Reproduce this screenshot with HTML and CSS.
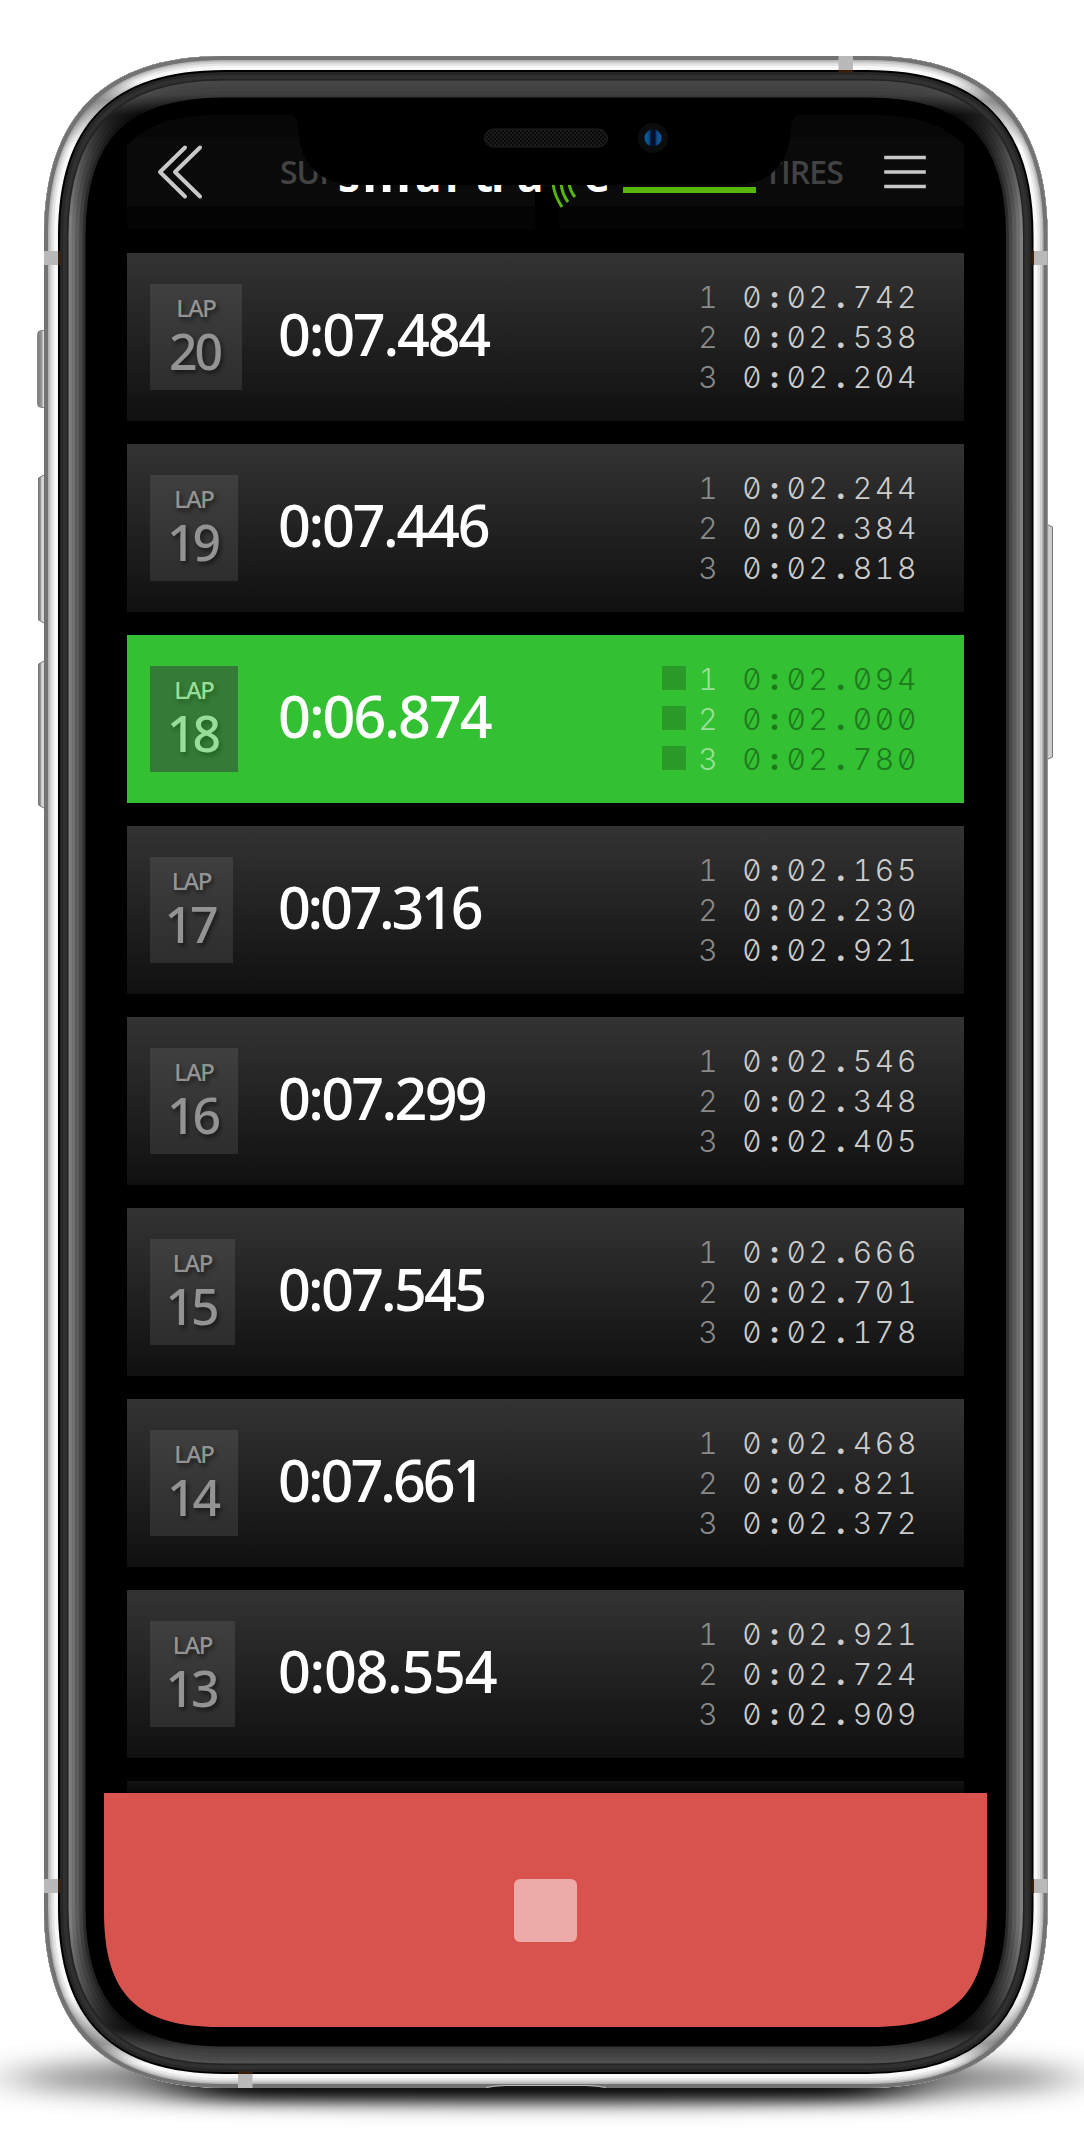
FILE: index.html
```html
<!DOCTYPE html>
<html lang="en">
<head>
<meta charset="utf-8">
<title>SmartRace – Lap times</title>
<link rel="stylesheet" href="styles.css">
</head>
<body>
<div class="phone">
  <svg class="frame" viewBox="0 0 1084 2142" aria-hidden="true">
    <defs>
      <path id="body" d="M44,236 C44,116 104,56 224,56 H867.5 C987.500,56 1047.500,116 1047.500,236 V1908 C1047.500,2028 987.500,2088 867.500,2088 H224 C104,2088 44,2028 44,1908 Z"/>
      <clipPath id="bodyClip"><use href="#body"/></clipPath>
      <linearGradient id="bezel" gradientUnits="userSpaceOnUse" x1="0" y1="56" x2="0" y2="2088">
        <stop offset="0" stop-color="#3a3a3a"/><stop offset=".019" stop-color="#3c3c3c"/><stop offset=".029" stop-color="#0a0a0a"/>
        <stop offset=".05" stop-color="#222"/><stop offset=".09" stop-color="#2f2f2f"/><stop offset=".91" stop-color="#2f2f2f"/>
        <stop offset=".95" stop-color="#222"/><stop offset=".971" stop-color="#0a0a0a"/><stop offset=".981" stop-color="#383838"/><stop offset="1" stop-color="#444"/>
      </linearGradient>
      <linearGradient id="gloss" gradientUnits="userSpaceOnUse" x1="0" y1="56" x2="0" y2="2088">
        <stop offset="0" stop-color="#fff" stop-opacity=".01"/><stop offset=".03" stop-color="#fff" stop-opacity=".02"/>
        <stop offset=".08" stop-color="#fff" stop-opacity=".115"/><stop offset=".92" stop-color="#fff" stop-opacity=".115"/>
        <stop offset=".97" stop-color="#fff" stop-opacity=".02"/><stop offset="1" stop-color="#fff" stop-opacity=".03"/>
      </linearGradient>
      <linearGradient id="corner" gradientUnits="userSpaceOnUse" x1="0" y1="56" x2="0" y2="2088">
        <stop offset=".012" stop-color="#666" stop-opacity="0"/><stop offset=".022" stop-color="#666" stop-opacity=".65"/><stop offset=".045" stop-color="#777" stop-opacity="0"/>
        <stop offset=".955" stop-color="#777" stop-opacity="0"/><stop offset=".978" stop-color="#666" stop-opacity=".65"/><stop offset=".988" stop-color="#666" stop-opacity="0"/>
      </linearGradient>
      <linearGradient id="key" x1="0" x2="1" y1="0" y2="0">
        <stop offset="0" stop-color="#777"/><stop offset=".35" stop-color="#999"/><stop offset=".5" stop-color="#ddd"/><stop offset="1" stop-color="#c8c8c8"/>
      </linearGradient>
      <filter id="soft" x="-20%" y="-200%" width="140%" height="500%"><feGaussianBlur stdDeviation="30 12"/></filter>
      <filter id="contact" x="-20%" y="-200%" width="140%" height="500%"><feGaussianBlur stdDeviation="40 8"/></filter>
    </defs>

    <ellipse cx="542" cy="2078" rx="535" ry="24" fill="#000" fill-opacity=".5" filter="url(#soft)"/>
    <rect x="180" y="2056" width="724" height="44" rx="20" fill="#000" fill-opacity=".95" filter="url(#contact)"/>

    <rect x="37.500" y="330.500" width="12" height="77" rx="4" fill="url(#key)" stroke="#888"/>
    <path d="M45,474.500 L38.500,478 V620 L45,623.500Z" fill="url(#key)" stroke="#777"/>
    <path d="M45,660.500 L38.500,664 V805 L45,808.500Z" fill="url(#key)" stroke="#777"/>
    <path d="M1046,524 L1052.500,527 V757 L1046,760Z" fill="#ccc" stroke="#777"/>

    <g clip-path="url(#bodyClip)" fill="none">
      <use href="#body" fill="#000"/>
      <use href="#body" stroke="url(#bezel)" stroke-width="83"/>
      <use href="#body" stroke="url(#gloss)" stroke-width="77"/>
      <use href="#body" stroke="url(#gloss)" stroke-width="70"/>
      <use href="#body" stroke="url(#gloss)" stroke-width="62"/>
      <use href="#body" stroke="url(#gloss)" stroke-width="55"/>
      <use href="#body" stroke="#222" stroke-width="49"/>
      <use href="#body" stroke="#303030" stroke-width="46"/>
      <use href="#body" stroke="#262626" stroke-width="38"/>
      <use href="#body" stroke="#000" stroke-width="32"/>
      <use href="#body" stroke="#f8f8f8" stroke-width="28"/>
      <use href="#body" stroke="#e6e6e6" stroke-width="20"/>
      <use href="#body" stroke="#cfcfcf" stroke-width="15"/>
      <use href="#body" stroke="#b4b4b4" stroke-width="11"/>
      <use href="#body" stroke="url(#corner)" stroke-width="28"/>
      <use href="#body" stroke="#737373" stroke-width="8"/>
      <g fill="#b9b9b9">
        <rect x="44" y="251" width="14" height="14"/><rect x="1034" y="251" width="14" height="14"/>
        <rect x="44" y="1879" width="14" height="14"/><rect x="1034" y="1879" width="14" height="14"/>
        <rect x="838.500" y="56" width="14.500" height="14"/><rect x="238" y="2074" width="14.500" height="14"/>
      </g>
      <g fill="#3a1e0c">
        <rect x="58" y="251" width="2.500" height="14"/><rect x="1031.500" y="251" width="2.500" height="14"/>
        <rect x="58" y="1879" width="2.500" height="14"/><rect x="1031.500" y="1879" width="2.500" height="14"/>
        <rect x="838.500" y="70" width="14.500" height="2.500"/><rect x="238" y="2071.500" width="14.500" height="2.500"/>
      </g>
      <path d="M486,2088 Q496,2086 506,2086 H586 Q596,2086 606,2088Z" fill="#161616"/>
      <path d="M486,2087.500 Q496,2085.500 506,2085.500 H586 Q596,2085.500 606,2087.500" stroke="#bbb"/>
    </g>
  </svg>

  <main class="screen">
    <header class="topbar">
      <svg class="back" viewBox="0 0 50 56"><path d="M30,3.500 L5,28 L30,52.500 M45,3.500 L20,28 L45,52.500"/></svg>
      <span class="tab tab-left">SUPER</span>
      <svg class="logo" viewBox="0 0 424 60">
        <text y="41" x="8 32 85 115 144 161 187 254">s<tspan class="wide">m</tspan>artrae</text>
        <rect x="293" y="36" width="133" height="6"/>
        <path d="M223,32 Q224,44 232,56 M231,32 Q232,43 238,51 M239,32 Q240,40 245,46"/>
      </svg>
      <span class="tab tab-right">TIRES</span>
      <svg class="menu" viewBox="0 0 42 34"><path d="M2,2.500 H40 M2,17 H40 M2,31.500 H40"/></svg>
    </header>

    <section class="laps">
      <article class="lap">
        <div class="badge"><small>LAP</small><strong>20</strong></div>
        <div class="time" style="--track:-2.2px">0:07.484</div>
        <ol class="sectors">
          <li><b>1</b><span>0</span><i>:</i><span>02</span><i>.</i><span>742</span></li>
          <li><b>2</b><span>0</span><i>:</i><span>02</span><i>.</i><span>538</span></li>
          <li><b>3</b><span>0</span><i>:</i><span>02</span><i>.</i><span>204</span></li>
        </ol>
      </article>
      <article class="lap">
        <div class="badge w88"><small>LAP</small><strong>19</strong></div>
        <div class="time" style="--track:-2.3px">0:07.446</div>
        <ol class="sectors">
          <li><b>1</b><span>0</span><i>:</i><span>02</span><i>.</i><span>244</span></li>
          <li><b>2</b><span>0</span><i>:</i><span>02</span><i>.</i><span>384</span></li>
          <li><b>3</b><span>0</span><i>:</i><span>02</span><i>.</i><span>818</span></li>
        </ol>
      </article>
      <article class="lap best">
        <div class="badge w88"><small>LAP</small><strong>18</strong></div>
        <div class="time" style="--track:-2px">0:06.874</div>
        <ol class="sectors">
          <li><b>1</b><span>0</span><i>:</i><span>02</span><i>.</i><span>094</span></li>
          <li><b>2</b><span>0</span><i>:</i><span>02</span><i>.</i><span>000</span></li>
          <li><b>3</b><span>0</span><i>:</i><span>02</span><i>.</i><span>780</span></li>
        </ol>
      </article>
      <article class="lap">
        <div class="badge w83"><small>LAP</small><strong>17</strong></div>
        <div class="time" style="--track:-3.3px">0:07.316</div>
        <ol class="sectors">
          <li><b>1</b><span>0</span><i>:</i><span>02</span><i>.</i><span>165</span></li>
          <li><b>2</b><span>0</span><i>:</i><span>02</span><i>.</i><span>230</span></li>
          <li><b>3</b><span>0</span><i>:</i><span>02</span><i>.</i><span>921</span></li>
        </ol>
      </article>
      <article class="lap">
        <div class="badge w88"><small>LAP</small><strong>16</strong></div>
        <div class="time" style="--track:-2.7px">0:07.299</div>
        <ol class="sectors">
          <li><b>1</b><span>0</span><i>:</i><span>02</span><i>.</i><span>546</span></li>
          <li><b>2</b><span>0</span><i>:</i><span>02</span><i>.</i><span>348</span></li>
          <li><b>3</b><span>0</span><i>:</i><span>02</span><i>.</i><span>405</span></li>
        </ol>
      </article>
      <article class="lap">
        <div class="badge w85"><small>LAP</small><strong>15</strong></div>
        <div class="time" style="--track:-2.8px">0:07.545</div>
        <ol class="sectors">
          <li><b>1</b><span>0</span><i>:</i><span>02</span><i>.</i><span>666</span></li>
          <li><b>2</b><span>0</span><i>:</i><span>02</span><i>.</i><span>701</span></li>
          <li><b>3</b><span>0</span><i>:</i><span>02</span><i>.</i><span>178</span></li>
        </ol>
      </article>
      <article class="lap">
        <div class="badge w88"><small>LAP</small><strong>14</strong></div>
        <div class="time" style="--track:-3px">0:07.661</div>
        <ol class="sectors">
          <li><b>1</b><span>0</span><i>:</i><span>02</span><i>.</i><span>468</span></li>
          <li><b>2</b><span>0</span><i>:</i><span>02</span><i>.</i><span>821</span></li>
          <li><b>3</b><span>0</span><i>:</i><span>02</span><i>.</i><span>372</span></li>
        </ol>
      </article>
      <article class="lap">
        <div class="badge w85"><small>LAP</small><strong>13</strong></div>
        <div class="time" style="--track:-1.3px">0:08.554</div>
        <ol class="sectors">
          <li><b>1</b><span>0</span><i>:</i><span>02</span><i>.</i><span>921</span></li>
          <li><b>2</b><span>0</span><i>:</i><span>02</span><i>.</i><span>724</span></li>
          <li><b>3</b><span>0</span><i>:</i><span>02</span><i>.</i><span>909</span></li>
        </ol>
      </article>
      <div class="lap next"></div>
    </section>

    <footer class="stopbar"><button class="stop" aria-label="Stop"></button></footer>
  </main>

  <svg class="notch" viewBox="0 0 520 80" aria-hidden="true">
    <defs>
      <pattern id="mesh" width="4" height="4" patternUnits="userSpaceOnUse"><rect width="4" height="4" fill="#1a1a1a"/><circle cx="1" cy="1" r="1" fill="#050505"/><circle cx="3" cy="3" r="1" fill="#050505"/></pattern>
      <linearGradient id="lens"><stop offset="0" stop-color="#0a63a8"/><stop offset=".28" stop-color="#0c4a85"/><stop offset=".38" stop-color="#06102c"/><stop offset=".62" stop-color="#06102c"/><stop offset=".72" stop-color="#0c4a85"/><stop offset="1" stop-color="#0a63a8"/></linearGradient>
    </defs>
    <path d="M0,0 C8,0 12,5 12,14 C14,51 33,71 74,71 H446 C484,71 503,51 505,14 C505,5 509,0 517,0Z"/>
    <rect x="198.500" y="15" width="123" height="18" rx="9" fill="url(#mesh)" stroke="#1f1f1f"/>
    <circle cx="367" cy="24" r="15" fill="#0b0d0d"/>
    <circle cx="367" cy="24" r="8.500" fill="url(#lens)"/>
  </svg>
</div>
</body>
</html>
```
FILE: styles.css
```css
* { box-sizing: border-box; }

body {
  margin: 0;
  background: #fff;
  font-family: "Noto Sans", "Open Sans", sans-serif;
}

.phone {
  position: relative;
  width: 1084px;
  height: 2142px;
  padding: 115px 0 0 104px;
  overflow: hidden;
}

.frame {
  position: absolute;
  inset: 0;
  width: 1084px;
  height: 2142px;
}

/* The display, with its continuous-curvature corners */
.screen {
  position: relative;
  display: flex;
  flex-direction: column;
  width: 883px;
  height: 1912px;
  background: #000;
  clip-path: path("M0,115 C0,33 33,0 115,0 H768 C850,0 883,33 883,115 V1797 C883,1879 850,1912 768,1912 H115 C33,1912 0,1879 0,1797 Z");
}

.notch {
  position: absolute;
  left: 286px;
  top: 114px;
  width: 520px;
  height: 80px;
}

/* Top bar */
.topbar {
  display: flex;
  align-items: center;
  flex: none;
  height: 114px;
  margin: 0 23px 24px;
  padding-left: 28px;
  background:
    linear-gradient(#000, #000) 408px 71px / 24px 43px no-repeat,
    linear-gradient(#070707 0 22px, #0a0a0a 22px 91px, #040404 91px);
}

.back { width: 50px; height: 56px; }
.menu { width: 42px; height: 34px; margin-left: 41px; }

.back path,
.menu path {
  fill: none;
  stroke: #c8c8c8;
  stroke-width: 4;
  stroke-linecap: round;
  stroke-linejoin: round;
}

.menu path { stroke-linecap: square; stroke-width: 3.6; }

.tab {
  color: #424242;
  font: 600 32px/40px "Open Sans", sans-serif;
  letter-spacing: -1px;
}

.tab-left { width: 50px; margin-left: 75px; white-space: nowrap; overflow: hidden; }
.tab-right { width: 79px; margin-left: 10px; white-space: nowrap; }

.logo { width: 424px; height: 60px; margin-top: 17px; flex: none; overflow: visible; }
.logo text { font: 700 44px "Open Sans", sans-serif; fill: #fff; }
.logo .wide { font-size: 50px; }
.logo rect { fill: #56b60b; }
.logo path { fill: none; stroke: #56b60b; stroke-width: 3; }

/* Lap list */
.laps {
  display: flex;
  flex-direction: column;
  gap: 23.5px;
  height: 1540px;
  padding: 0 23px;
  overflow: hidden;
}

.lap {
  display: grid;
  grid-template-columns: 151px 1fr auto;
  align-items: center;
  flex: none;
  height: 167.5px;
  padding-right: 45px;
  background: linear-gradient(#333, #101010);
}

.lap.next { background: linear-gradient(#131313, #080808 12px); }

.badge {
  display: flex;
  flex-direction: column;
  align-items: center;
  width: 92px;
  height: 106px;
  margin-left: 23px;
  padding-top: 8px;
  color: #939393;
  background: linear-gradient(#3f3f3f, #2d2d2d);
  text-shadow: 2px 3px 4px rgba(0, 0, 0, .5);
}

.badge.w88 { width: 88px; }
.badge.w85 { width: 85px; }
.badge.w83 { width: 83px; }

.badge small {
  font: 500 24px/32px "Noto Sans", sans-serif;
  letter-spacing: -1.3px;
}

.badge strong {
  margin-right: 3px;
  font: 500 50px/54px "Noto Sans", sans-serif;
  letter-spacing: -3px;
}

.time {
  padding-bottom: 6px;
  color: #fff;
  font-size: 57.5px;
  font-weight: 500;
  line-height: 70px;
  letter-spacing: var(--track);
  white-space: nowrap;
}

.sectors {
  margin: 1px 0 0;
  padding: 0;
  list-style: none;
  color: #ccc;
  font: 300 30px/40px Inter, sans-serif;
  font-feature-settings: "tnum", "zero";
}

.sectors li { display: flex; }
.sectors span { letter-spacing: 2.7px; }
.sectors i { width: 22px; margin-left: -1px; margin-right: 1px; text-align: center; font-style: normal; font-weight: 800; }
.sectors b { width: 44px; font-weight: 300; color: #8a8a8a; }

/* Fastest lap */
.lap.best { background: #34c033; }

.best .badge {
  color: #98de98;
  background: #357a37;
  text-shadow: 2px 3px 4px rgba(0, 60, 0, .35);
}

.best .sectors { color: #1d7a1d; }
.best .sectors b { color: #99e099; }

.best .sectors li::before {
  content: "";
  width: 24px;
  height: 24px;
  margin: 7px 12px 0 0;
  background: #2a9a29;
}

/* Stop control */
.stopbar {
  display: grid;
  place-items: center;
  flex: 1;
  background: #d9534e;
}

.stop {
  width: 63px;
  height: 63px;
  padding: 0;
  border: 0;
  border-radius: 6px;
  background: #ecaaa8;
}
```
